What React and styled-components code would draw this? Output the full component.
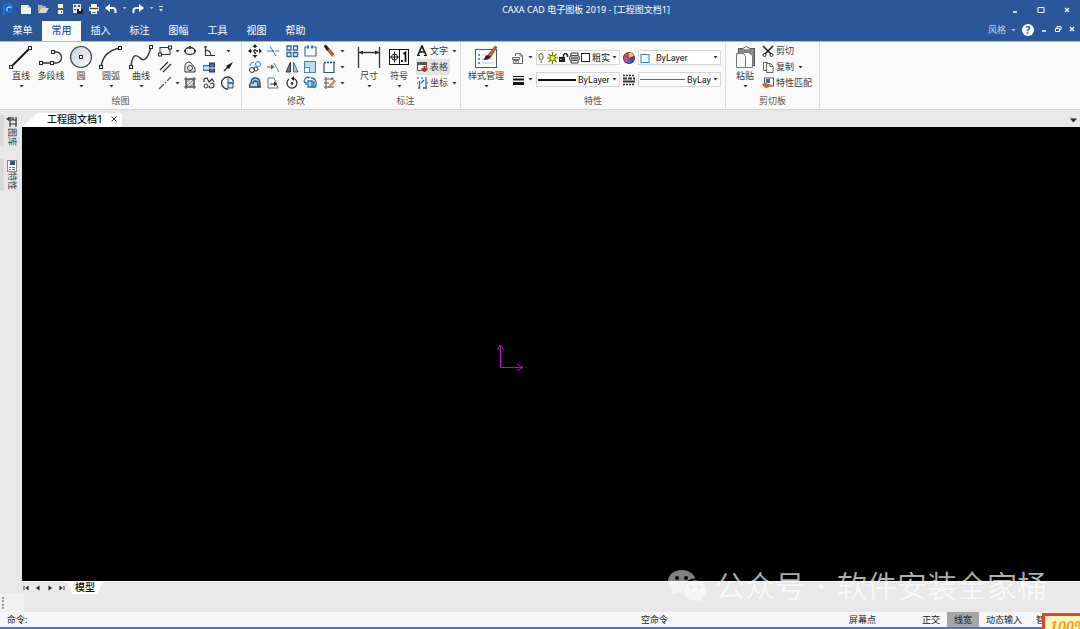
import React from "react";
import styled, { createGlobalStyle, css } from "styled-components";

const theme = {
  blue: "#2b579a",
  ribbon: "#fafafa",
  grey: "#e8e8e8",
  line: "#dcdcdc",
  ink: "#3a3a3a",
  sky: "#3c86c4",
};

const GlobalStyle = createGlobalStyle`
  * { box-sizing: border-box; }
  body {
    margin: 0;
    color: ${theme.ink};
    font-family: "Noto Sans", "Noto Sans CJK SC", sans-serif;
    font-size: 9px;
    line-height: 12px;
    overflow: hidden;
  }
  button, input, select {
    background: transparent;
    border: 0;
    color: inherit;
    font: inherit;
    margin: 0;
    padding: 0;
  }
`;

const Icon = ({ w = 14, h = 14, color = "#333", sw = 1, children, label }) => (
  <svg
    width={w}
    height={h}
    viewBox={`0 0 ${w} ${h}`}
    fill="none"
    stroke={color}
    strokeWidth={sw}
    aria-hidden={!label}
    aria-label={label}
  >
    {children}
  </svg>
);

const Node = ({ x, y }) => (
  <rect x={x - 1.5} y={y - 1.5} width="3" height="3" fill="#fff" stroke="#222" strokeWidth="1" />
);

const DownArrow = ({ color = "#333" }) => (
  <Icon w={5} h={3} color="none">
    <path d="M0.5 0h4L2.5 2.6z" fill={color} />
  </Icon>
);

/* quick access icons */
const quickIcons = [
  ["新建", <Icon key="n" w={12} h={10} color="none"><path d="M1 1h7l3 3v6H1z" fill="#f4f4f4" /><path d="M8 1l3 3H8z" fill="#b9c4d6" /></Icon>],
  ["打开", <Icon key="o" w={12} h={10} color="none"><path d="M1 1h4l1 1h3v2H4L1 8z" fill="#b8b09a" /><path d="M4 4h8L9 9H1z" fill="#d9d5ca" /></Icon>],
  ["保存", <Icon key="s" w={12} h={10} color="none"><path d="M3 0h7v10H3z" fill="#5b5b55" /><path d="M4 0h5v4H4zM4 6h5v4H4z" fill="#f3efe2" /><path d="M7 7h1v2H7z" fill="#555" /></Icon>],
  ["另存为", <Icon key="a" w={12} h={10} color="none"><path d="M2 0h8v9H2z" fill="#e8e8e8" /><path d="M3 1h2v2H3zM7 1h2v2H7zM3 5h2v1H3z" fill="#555" /><path d="M6 5h6v5H6z" fill="#1d1d28" /><path d="M8 5h2v2H8z" fill="#fff" /></Icon>],
  ["打印", <Icon key="p" w={12} h={10} color="none"><path d="M3 0h6v3H3z" fill="#fff" /><path d="M1 3h10v4H1z" fill="#d8d8d0" /><path d="M2 4h8v1H2z" fill="#444" /><path d="M3 6h6v4H3z" fill="#fff" /><path d="M4 8h4v1H4z" fill="#777" /></Icon>],
  ["撤销", <Icon key="u" w={12} h={10} color="#fff" sw={2}><path d="M3 4h5q3 0 2.5 5" /><path d="M5 0v8L0 4z" fill="#fff" stroke="none" /></Icon>],
  ["重做", <Icon key="r" w={12} h={10} color="#fff" sw={2}><path d="M9 4H4Q1 4 1.5 9" /><path d="M7 0v8l5-4z" fill="#fff" stroke="none" /></Icon>],
];

/* large icons */
const LineIcon = () => (
  <Icon w={26} h={26}><path d="M3 23L22 4" stroke="#111" strokeWidth="1.8" /><Node x={3} y={23} /><Node x={22} y={4} /></Icon>
);
const PolylineIcon = () => (
  <Icon w={26} h={26}><path d="M3 19H15M15 19H18a5.5 5.5 0 0 0 0-11H15" strokeWidth="1.4" /><Node x={3} y={19} /><Node x={14} y={19} /><Node x={15} y={8} /></Icon>
);
const CircleIcon = () => (
  <Icon w={26} h={26}>
    <defs><linearGradient id="disc" x1="0" y1="0" x2="1" y2="1"><stop stopColor="#c9d0d6" /><stop offset="1" stopColor="#fbfbfb" /></linearGradient></defs>
    <circle cx="13" cy="13" r="10.5" fill="url(#disc)" stroke="#444" strokeWidth="1.2" /><Node x={13} y={13} />
  </Icon>
);
const ArcIcon = () => (
  <Icon w={26} h={26}><path d="M3 23Q5 7 22 4" strokeWidth="1.4" /><Node x={3} y={23} /><Node x={22} y={4} /></Icon>
);
const CurveIcon = () => (
  <Icon w={26} h={26}><path d="M3 23C4 10 8 10 12 14S20 15 23 3" strokeWidth="1.4" /><Node x={3} y={23} /><Node x={23} y={3} /></Icon>
);
const DimensionIcon = () => (
  <Icon w={26} h={26}><path d="M2.5 3v21M23.5 3v21M3 8.5h20" strokeWidth="1.3" /><path d="M3 8.5l4-2v4zM23 8.5l-4-2v4z" fill="#222" stroke="none" /></Icon>
);
const SymbolIcon = () => (
  <Icon w={26} h={26} color="#111">
    <rect x="3.500" y="5.500" width="19" height="15" fill="#fff" /><path d="M13.500 5.500v15M8.500 7.500v11M4 13h9" /><circle cx="8.500" cy="13" r="3" />
    <path d="M15 16h2v2h-2z" fill="#111" stroke="none" /><path d="M17.500 10l2-1.500V18" strokeWidth="1.800" />
  </Icon>
);
const StyleIcon = () => (
  <Icon w={26} h={26}>
    <rect x="2.500" y="5.500" width="21" height="18" fill="#fff" stroke="#555" />
    <path d="M5 11h2M5 15h2M5 19h2" stroke="#3b6ea5" strokeWidth="1.500" /><path d="M9 11h5M9 15h5M9 19h12M16 15h5" stroke="#bcc8d6" />
    <path d="M15 11l7-9 2 1-6 10z" fill="#c4652f" stroke="#7a3b1c" strokeWidth=".6" /><path d="M11 16q1-5 4-5l3 2q-2 3-7 3z" fill="#222" stroke="none" />
  </Icon>
);
const PasteIcon = () => (
  <Icon w={26} h={26}>
    <rect x="6.500" y="4.500" width="16" height="17" fill="#8d8d8d" stroke="#555" /><path d="M10 6q0-2 2-2 2-3 5 0 2 0 2 2z" fill="#eee" stroke="#666" />
    <path d="M9.500 8.500h7l4 3v12h-11z" fill="#fff" stroke="#777" /><path d="M4.500 9.500h7l2 3v11h-9z" fill="#f5f8fb" stroke="#777" />
  </Icon>
);

/* drawing tools, row by row; null leaves the cell empty */
const arrow = <DownArrow />;
const drawTools = [
  ["矩形", <Icon key="1"><rect x="2" y="3.500" width="10" height="7" /><Node x={2} y={10.5} /><Node x={12} y={3.5} /></Icon>],
  ["矩形选项", arrow],
  ["椭圆", <Icon key="2"><ellipse cx="7" cy="7" rx="5" ry="3.500" strokeWidth="1.300" /><path d="M7 2v3M1 7h2M11 7h2" strokeWidth="1.800" /></Icon>],
  ["坐标轴", <Icon key="3"><path d="M3.500 2v9.500H13M2 3h3M3 6q5 0 6 5" strokeWidth="1.200" /></Icon>],
  ["更多", arrow],
  ["平行线", <Icon key="4"><path d="M2 10L10 2M5 12L13 4" strokeWidth="1.200" /></Icon>],
  null,
  ["孔", <Icon key="5"><path d="M2 12V6q0-4 5-4l5 6v4z" fill="#eee" /><circle cx="7" cy="8" r="2.500" /></Icon>],
  ["轴", <Icon key="6"><rect x="1.500" y="5.500" width="6" height="5" fill="#9fc6e8" stroke="#4d6c8a" /><rect x="7.500" y="3" width="5" height="9" fill="#3572ad" stroke="#333" /><path d="M1 8h12" stroke="#eee" /></Icon>],
  ["箭头", <Icon key="7"><path d="M3 11L8 6" strokeWidth="1.400" /><path d="M12 2L5 6l3 3z" fill="#111" stroke="none" /></Icon>],
  ["中心线", <Icon key="8" color="#44608a"><path d="M1 13L6 8M7 7l1-1M9 5l4-4" strokeWidth="1.300" /></Icon>],
  ["中心线选项", arrow],
  ["剖面线", <Icon key="9" color="#555"><rect x="3" y="3" width="8" height="8" fill="#d4d4d4" /><path d="M3 1v12M11 1v12M1 3h12M1 11h12" /><path d="M3 7l4-4M3 11l8-8M7 11l4-4" strokeWidth=".5" /></Icon>],
  ["云线", <Icon key="10"><path d="M2 6V3l3-1 2 4 3-3 2 3M8 8q4-2 4 1t-3 3-1-2" strokeWidth="1.200" /><circle cx="4" cy="10" r="2" /></Icon>],
  ["圆弧齿形", <Icon key="11"><path d="M12.500 6a6 6 0 1 0-5.500 7" strokeWidth="1.300" /><path d="M7 1v6h6M7 7h5v5H7z" stroke="#25506f" fill="#cfe4f4" /></Icon>],
];

const editTools = [
  ["平移", <Icon key="1" color="#222"><path d="M7 2v10M2 7h10" strokeDasharray="2 1" strokeWidth="1.500" /><path d="M7 0l2.500 3h-5zM7 14l2.500-3h-5zM0 7l3-2.500v5zM14 7l-3-2.500v5z" fill="#222" stroke="none" /></Icon>],
  ["裁剪", <Icon key="2" color={theme.sky}><path d="M1 7h5M9 7h4M4 2l6 10" /><path d="M6 7h2" stroke="#444" /></Icon>],
  ["阵列", <Icon key="3" color="#2c679c" sw={1.3}><path d="M2 2h4v4H2zM8.500 2h4v4h-4zM2 8.500h4v4H2zM8.500 8.500h4v4h-4z" fill="#e4f1fb" /></Icon>],
  ["打断", <Icon key="4" color="#476c8f"><path d="M5 3H2v9h11V3h-3" strokeWidth="1.200" /><path d="M4 3h7" strokeDasharray="2 2" strokeWidth="3" /></Icon>],
  ["删除", <Icon key="5"><path d="M2 2l2-1 8 9-2 2z" fill="#c8692d" stroke="#6b3718" strokeWidth=".7" /><path d="M2 2l2-1 3 4-2 2z" fill="#222" stroke="none" /><path d="M9 12h4" stroke="#cc9a36" /></Icon>],
  ["删除选项", arrow],
  ["复制", <Icon key="6"><circle cx="4" cy="10" r="2.500" /><circle cx="8" cy="9" r="2" /><circle cx="10" cy="4" r="2.500" stroke={theme.sky} /><path d="M2 6q0-4 4-4" stroke={theme.sky} /></Icon>],
  ["延伸", <Icon key="7"><path d="M1 7h6" stroke="#555" /><path d="M8 3l5 9" stroke={theme.sky} /><path d="M5 4.500L8.500 7 5 9.500z" fill="#555" stroke="none" /></Icon>],
  ["镜像", <Icon key="8"><path d="M5.500 2v10H1z" fill="#777" /><path d="M8.500 2v10H13z" fill="#a9cdea" stroke="#3d6f9d" /></Icon>],
  ["缩放", <Icon key="9" color="#4d82af"><rect x="1.500" y="1.500" width="11" height="11" fill="#bcdaf1" /><rect x="1.500" y="7.500" width="5" height="5" fill="#fff" /></Icon>],
  ["拉伸", <Icon key="10" color="#2f5273"><path d="M2 3v9.500h10V3" strokeWidth="1.200" /><path d="M2 2.500h11" strokeDasharray="2 1" strokeWidth="1.500" /></Icon>],
  ["拉伸选项", arrow],
  ["等距线", <Icon key="11" color="#27435f" sw={1.3}><path d="M1 11h12M3 11q-3-2 0-4 0-5 4.500-5T12 8v3M5 8q0-3 2.500-3T10 8v3" fill="#b9d6ec" /></Icon>],
  ["旋转视图", <Icon key="12" color="#56708a"><path d="M2 2h6l4 10H2z" fill="#fff" /><path d="M4 8h6" stroke="#222" /><path d="M8 5.500L11 8l-3 2.500z" fill="#222" stroke="none" /></Icon>],
  ["旋转", <Icon key="13"><path d="M4 3a5 5 0 1 0 5-.5" strokeWidth="1.300" /><path d="M9 0v5L6 2.500z" fill="#222" stroke="none" /><circle cx="7" cy="7.500" r="1" fill="#222" /></Icon>],
  ["分解", <Icon key="14" color="#2a72af" sw={1.3}><path d="M3 7q-3-1-1-4t5-1M8 2q4 0 5 4t-2 6" /><path d="M5 5h4v6H5zM9 6h2v5H9zM3 6v3" fill="#bcdcf3" /></Icon>],
  ["编辑", <Icon key="15"><path d="M2 3h10M2 11h10M4 1v12M10 1v3M2 7h5" stroke="#555" /><path d="M6 11l6-7 1.500 1-6 7z" fill="#d2a460" stroke="#7b5a2c" strokeWidth=".6" /></Icon>],
  ["编辑选项", arrow],
];

const Tools = ({ items, columns }) => (
  <ToolGrid $columns={columns}>
    {items.map((item, i) =>
      item ? (
        <ToolButton key={i} aria-label={item[0]}>{item[1]}</ToolButton>
      ) : (
        <span key={i} />
      )
    )}
  </ToolGrid>
);

const Big = ({ icon, label, width, noArrow }) => (
  <BigButton $width={width}>
    {icon}
    <span>{label}</span>
    <ArrowSlot>{!noArrow && <DownArrow />}</ArrowSlot>
  </BigButton>
);

const Small = ({ icon, label, active, drop }) => (
  <SmallButton $active={active}>
    {icon}
    <span>{label}</span>
    {drop && <DownArrow />}
  </SmallButton>
);

const Group = ({ title, pad, padEnd = "4px", divider = true, children }) => (
  <GroupBox $divider={divider}>
    <GroupBody $pad={pad} $padEnd={padEnd}>{children}</GroupBody>
    <GroupTitle>{title}</GroupTitle>
  </GroupBox>
);

const Header = () => {
  const menus = ["菜单", "常用", "插入", "标注", "图幅", "工具", "视图", "帮助"];
  return (
    <HeaderBar>
      <TitleRow>
        <QuickAccess>
          <Icon w={14} h={14} color="#2f9bf0" sw={2} label="CAXA">
            <path d="M4 13V4q1-3 5-2t3 5-5 3" stroke="#1479dd" /><path d="M7 9V6q3-2 4 0" stroke="#8bd2ff" strokeWidth="1.500" />
          </Icon>
          <QuickList>
            {quickIcons.map(([name, icon], i) => (
              <React.Fragment key={name}>
                <QuickButton aria-label={name}>{icon}</QuickButton>
                {i > 4 && <DownArrow color="#a9bedc" />}
              </React.Fragment>
            ))}
          </QuickList>
          <QuickButton aria-label="自定义">
            <Icon w={6} h={6} color="#dbe5f3"><path d="M1 .5h4" /><path d="M1 3h4L3 5.500z" fill="#dbe5f3" stroke="none" /></Icon>
          </QuickButton>
        </QuickAccess>
        <Title>CAXA CAD 电子图板 2019 - [工程图文档1]</Title>
        <WindowButtons>
          <button aria-label="最小化"><Icon w={8} h={8} color="#fff" sw={1.5}><path d="M2 6h4" /></Icon></button>
          <button aria-label="最大化"><Icon w={8} h={8} color="#fff"><path d="M1 1.500h6v5H1z" /><path d="M1 1.500h6" /></Icon></button>
          <button aria-label="关闭"><Icon w={8} h={8} color="#fff" sw={1.4}><path d="M2 2l4 4M6 2L2 6" /></Icon></button>
        </WindowButtons>
      </TitleRow>
      <MenuRow>
        <nav>
          {menus.map((name) => (
            <MenuTab key={name} $active={name === "常用"}>{name}</MenuTab>
          ))}
        </nav>
        <MenuTools>
          <StyleButton>风格 <DownArrow color="#a9bedc" /></StyleButton>
          <HelpButton aria-label="帮助">?</HelpButton>
          <button aria-label="最小化文档"><Icon w={8} h={8} color="#fff" sw={1.5}><path d="M2 6h4" /></Icon></button>
          <button aria-label="还原文档"><Icon w={8} h={8} color="#fff"><path d="M3 3V1.500h4v3H5.500M1.500 3.500h4v3h-4z" /></Icon></button>
          <button aria-label="关闭文档"><Icon w={8} h={8} color="#fff" sw={1.4}><path d="M2 2l4 4M6 2L2 6" /></Icon></button>
        </MenuTools>
      </MenuRow>
    </HeaderBar>
  );
};

const Combo = ({ label, before, value, gap }) => (
  <ComboBox $gap={gap}>
    {before}
    <select aria-label={label} defaultValue={value}>
      <option>{value}</option>
    </select>
    <DownArrow />
  </ComboBox>
);

const LayerIcons = () => (
  <Icon w={52} h={12}>
    <path d="M2.500 8Q.5 6 1 3.500q2-4 4 0Q5.500 6 4 8zM2.500 10h2" stroke="#555" fill="#fff7c2" />
    <path d="M14.500 0v12M9 6h11M10.500 2l8 8M18.500 2l-8 8" stroke="#6f7d12" strokeWidth="1.200" /><circle cx="14.500" cy="6" r="2.800" fill="#e7ee33" stroke="#6f7d12" />
    <rect x="21" y="5" width="6" height="5" fill="#222" stroke="none" /><path d="M25.500 6V3q2-3 4 0v2" stroke="#222" strokeWidth="1.500" /><path d="M22 7h2v1h-2z" fill="#a8b930" stroke="none" />
    <path d="M33 4V1h7v3M33 8v3h7V8" fill="#fff" /><rect x="31.500" y="3.500" width="10" height="5" rx="2" fill="#bbb" stroke="#444" /><path d="M33 6h7" />
    <rect x="43.500" y="1.500" width="8" height="8" fill="#fff" stroke="#222" />
  </Icon>
);

const Ribbon = () => (
  <RibbonBar>
    <Group title="绘图" pad="6px">
      <Big icon={<LineIcon />} label="直线" width="30px" />
      <Big icon={<PolylineIcon />} label="多段线" width="30px" noArrow />
      <Big icon={<CircleIcon />} label="圆" width="30px" />
      <Big icon={<ArcIcon />} label="圆弧" width="30px" />
      <Big icon={<CurveIcon />} label="曲线" width="30px" />
      <Tools items={drawTools} columns="17px 8px 18px 20px 18px" />
    </Group>
    <Group title="修改" pad="3px" divider={false}>
      <Tools items={editTools} columns="19px 18px 19px 18px 19px 8px" />
    </Group>
    <Group title="标注" pad="3px" padEnd="1px">
      <Big icon={<DimensionIcon />} label="尺寸" width="30px" />
      <Big icon={<SymbolIcon />} label="符号" width="30px" />
      <SmallColumn>
        <Small label="文字" drop icon={<Icon w={12} h={12} color="#111" sw={1.6}><path d="M2 10L6 1l4 9M4 7h4" /><path d="M1 10.500h3M8 10.500h3" strokeWidth="1" /></Icon>} />
        <Small label="表格" active icon={<Icon w={12} h={12} color="#555"><rect x="1.500" y="1.500" width="9" height="8" fill="#fff" /><path d="M2 3h8" strokeWidth="2" /><path d="M8.500 5v6M5.500 8h6" stroke="#d62828" strokeWidth="2" /></Icon>} />
        <Small label="坐标" drop icon={<Icon w={12} h={12} color="#3a5f8b"><path d="M3.500 4v7M2 11h2M10 2v9M7 11h4M5 6l3-3" strokeWidth="1.300" /><path d="M1 1h2M5 1h2M9 1h2M1 6h1M11 6h1" strokeWidth="1.500" stroke="#4c93d0" /></Icon>} />
      </SmallColumn>
    </Group>
    <Group title="特性" pad="3px">
      <Big icon={<StyleIcon />} label="样式管理" width="44px" />
      <PropertyGrid>
        <IconDrop aria-label="图层">
          <Icon w={14} h={14} color="#666"><path d="M4.500 5V2.500h5l2 2v8h-4M9 3v2h2" fill="#fff" /><path d="M1.500 6.500h7v2h-7zM2.500 9.500h5v3h-5zM5 8v4" fill="#eee" /></Icon>
          <DownArrow />
        </IconDrop>
        <Combo label="当前图层" before={<LayerIcons />} value="粗实" gap="2px" />
        <PropertyButton aria-label="颜色">
          <Icon w={12} h={12} color="none">
            <circle cx="6" cy="6" r="6" fill="#333" /><path d="M6 6L1 4a5 5 0 0 1 5-3.200z" fill="#e04836" /><path d="M6 6V.8A5 5 0 0 1 11 4z" fill="#f3cf3d" /><path d="M6 6l5-2a5 5 0 0 1-2 6z" fill="#57439a" /><path d="M6 6l3 4a5 5 0 0 1-5 .8z" fill="#3573c4" /><path d="M6 6L4 10.800A5 5 0 0 1 1 4z" fill="#b9529a" />
          </Icon>
        </PropertyButton>
        <Combo label="颜色值" before={<Icon w={10} h={10} color="#2f80cf"><rect x="1" y="1.500" width="8" height="8" fill="#fff" /></Icon>} value="ByLayer" gap="6px" />
        <IconDrop aria-label="线宽">
          <Icon w={14} h={10} color="#111"><path d="M2 1.500h11" /><path d="M2 4.500h11" strokeWidth="2" /><path d="M2 8.500h11" strokeWidth="3" /></Icon>
          <DownArrow />
        </IconDrop>
        <Combo label="线宽值" before={<Stroke $color="#111" $width="38px" $weight="2px" />} value="ByLayer" gap="2px" />
        <PropertyButton aria-label="线型">
          <Icon w={12} h={12} color="#333"><path d="M0 1.500h12M0 10.500h12" strokeDasharray="2 1" strokeWidth="1.500" /><path d="M0 4.500h12" strokeDasharray="4 1" strokeWidth="2" /><path d="M0 7.500h12" strokeWidth="2" /></Icon>
        </PropertyButton>
        <Combo label="线型值" before={<Stroke $color="#f0331c" $width="45px" $weight="1px" />} value="ByLayer" gap="2px" />
      </PropertyGrid>
    </Group>
    <Group title="剪切板" pad="4px" padEnd="5px">
      <Big icon={<PasteIcon />} label="粘贴" width="30px" />
      <SmallColumn>
        <Small label="剪切" icon={<Icon w={12} h={12} color="#222"><path d="M1 1l8 8M11 1L3 9" strokeWidth="1.600" /><circle cx="2.500" cy="10" r="1.500" /><circle cx="9.500" cy="10" r="1.500" /></Icon>} />
        <Small label="复制" drop icon={<Icon w={12} h={12} color="#666"><path d="M1.500 1.500h4v8h-4z" fill="#fff" /><path d="M4.500 2.500h4l2.500 2.500v6.500H4.500zM8 3v2.500h3" fill="#fff" /></Icon>} />
        <Small label="特性匹配" icon={<Icon w={12} h={12} color="#456"><rect x="2.500" y="1" width="9" height="8" fill="#fff" /><rect x="4" y="2" width="4" height="4" fill="#3c6da8" stroke="none" /><path d="M0 7q4-2 6 0l5 1-4 2q-4 3-7-3z" fill="#c7682c" stroke="none" /></Icon>} />
      </SmallColumn>
    </Group>
  </RibbonBar>
);

const Watermark = () => (
  <WatermarkBox>
    <svg width="40" height="34" viewBox="0 0 40 34" aria-hidden="true">
      <path fill="#fff" fillOpacity=".5" fillRule="evenodd" d="M14.500 1C6.500 1 1 6 1 12.500c0 4 2 7 5 9L5 26l5-2.500q3 1 6 .8C14 16 20 9.500 28 9.500 26.500 4 21 1 14.500 1zM10 7a2 2 0 1 1 0 4 2 2 0 0 1 0-4zm9 0a2 2 0 1 1 0 4 2 2 0 0 1 0-4z" />
      <path fill="#f7f7f7" fillOpacity=".9" fillRule="evenodd" d="M28 11.500c-6.500 0-11.500 4.500-11.500 10S21.500 31.500 28 31.500q2 0 4-.7l4 2.200-1-4c3-2 4.500-4.500 4.500-7.500 0-5.500-5-10-11.500-10zm-4 5a1.600 1.600 0 1 1 0 3.200 1.600 1.600 0 0 1 0-3.200zm8 0a1.600 1.600 0 1 1 0 3.200 1.600 1.600 0 0 1 0-3.200z" />
    </svg>
    <span>公众号</span>
    <Dot>·</Dot>
    <span>软件安装全家桶</span>
  </WatermarkBox>
);

const Workspace = () => (
  <WorkspaceBox>
    <Dock>
      <DockTab>
        <Icon w={12} h={12}><path d="M4 1v10M4 4h7M4 8h7M7 1v3M10 1v10M2 2h4" strokeWidth="1.200" /><path d="M0 3l3-2v4z" fill="#333" stroke="none" /></Icon>
        <span>图库</span>
      </DockTab>
      <DockTab>
        <Icon w={12} h={12} color="#888"><rect x="1.500" y=".5" width="9" height="11" fill="#fff" /><rect x="4" y="1" width="5" height="4" fill="#1e5896" stroke="none" /><path d="M3 7.500h2M6 7.500h3M3 9.500h2M6 9.500h3" stroke="#47729e" /></Icon>
        <span>特性</span>
      </DockTab>
    </Dock>
    <DocumentArea>
      <DocumentTabs>
        <DocumentTab>
          <span>工程图文档1</span>
          <button aria-label="关闭标签"><Icon w={6} h={6} color="#444"><path d="M.5 .5l5 5M5.500 .5l-5 5" /></Icon></button>
        </DocumentTab>
        <TabList aria-label="文档列表"><Icon w={7} h={5} color="none"><path d="M0 .5h7L3.500 4.500z" fill="#222" /></Icon></TabList>
      </DocumentTabs>
      <Canvas>
        <Ucs width="28" height="28" viewBox="0 0 28 28" aria-label="坐标系">
          <path d="M2.500 22.500V1M-1 5l3.500-5L6 5M2.500 22.500H24M19 19l6 3.500-6 3.500" fill="none" stroke="#b010b4" />
        </Ucs>
      </Canvas>
      <ModelRow>
        <ModelNav>
          <button aria-label="第一页"><Icon w={6} h={6}><path d="M1 1v4" /><path d="M5.500 .5v5L2.500 3z" fill="#222" stroke="none" /></Icon></button>
          <button aria-label="上一页"><Icon w={6} h={6} color="none"><path d="M4.500 .5v5L1 3z" fill="#222" /></Icon></button>
          <button aria-label="下一页"><Icon w={6} h={6} color="none"><path d="M1.500 .5v5L5 3z" fill="#222" /></Icon></button>
          <button aria-label="最后一页"><Icon w={6} h={6}><path d="M5 1v4" /><path d="M.5 .5v5L3.500 3z" fill="#222" stroke="none" /></Icon></button>
        </ModelNav>
        <ModelTab>模型</ModelTab>
      </ModelRow>
    </DocumentArea>
  </WorkspaceBox>
);

const App = () => (
  <Page>
    <GlobalStyle />
    <Header />
    <Ribbon />
    <Workspace />
    <ToolStrip><Grip /></ToolStrip>
    <StatusBar>
      <span>命令:</span>
      <span>空命令</span>
      <span>屏幕点</span>
      <Modes>
        <ModeButton>正交</ModeButton>
        <ModeButton $active>线宽</ModeButton>
        <ModeButton>动态输入</ModeButton>
        <ModeButton>智</ModeButton>
      </Modes>
    </StatusBar>
    <Watermark />
    <Badge>100%</Badge>
  </Page>
);
export default App;

const Page = styled.div`
  background: ${theme.grey};
  display: flex;
  flex-direction: column;
  height: 100vh;
  overflow: hidden;
  position: relative;
`;

const center = css`
  align-items: center;
  display: flex;
  justify-content: center;
`;

const HeaderBar = styled.header`
  background: ${theme.blue};
  border-bottom: 1px solid #a9b9dc;
  color: #fff;
  flex-shrink: 0;
`;

const TitleRow = styled.div`
  align-items: center;
  display: flex;
  height: 21px;
  padding-bottom: 4px;
`;

const QuickAccess = styled.div`
  align-items: center;
  display: flex;
  gap: 4px;
`;

const QuickList = styled.div`
  align-items: center;
  display: flex;
  gap: 5px;
  margin-left: 2px;
`;

const QuickButton = styled.button`
  ${center}
`;

const Title = styled.h1`
  flex: 1;
  font-size: 9px;
  font-weight: 400;
  margin: 3px 0 0;
  padding-right: 3px;
  text-align: center;
`;

const WindowButtons = styled.div`
  display: flex;
  gap: 18px;
  margin-top: 4px;
  padding-right: 9px;
`;

const MenuRow = styled.div`
  display: flex;
  justify-content: space-between;
  padding-left: 3px;

  nav {
    display: flex;
  }
`;

const MenuTab = styled.button`
  background: ${({ $active }) => ($active ? theme.ribbon : "transparent")};
  color: ${({ $active }) => ($active ? theme.blue : "#fff")};
  font-size: 10px;
  font-weight: ${({ $active }) => ($active ? 500 : 400)};
  height: 20px;
  line-height: 18px;
  padding-bottom: 2px;
  width: 39px;
`;

const MenuTools = styled.div`
  align-items: center;
  display: flex;
  gap: 6px;
  padding-bottom: 2px;
  padding-right: 4px;
`;

const StyleButton = styled.button`
  ${center}
  color: #c3d1e6;
  gap: 5px;
`;

const HelpButton = styled.button`
  background: #fff;
  border-radius: 50%;
  color: ${theme.blue};
  font-size: 10px;
  font-weight: 700;
  height: 12px;
  line-height: 12px;
  width: 12px;
`;

const RibbonBar = styled.section`
  background: ${theme.ribbon};
  border-bottom: 1px solid #d4d4d4;
  display: flex;
  flex-shrink: 0;
  height: 68px;
`;

const GroupBox = styled.div`
  border-right: 1px solid ${({ $divider }) => ($divider ? theme.line : "transparent")};
  display: flex;
  flex-direction: column;
  padding-top: 1px;
`;

const GroupBody = styled.div`
  display: flex;
  height: 49px;
  padding-left: ${({ $pad }) => $pad};
  padding-right: ${({ $padEnd }) => $padEnd};
`;

const GroupTitle = styled.div`
  color: #555;
  padding-top: 3px;
  text-align: center;
`;

const BigButton = styled.button`
  align-items: center;
  display: flex;
  flex-direction: column;
  padding-top: 1px;
  white-space: nowrap;
  width: ${({ $width }) => $width};

  svg {
    flex-shrink: 0;
  }
`;

const ArrowSlot = styled.span`
  display: flex;
  height: 6px;
  padding-top: 3px;
`;

const ToolGrid = styled.div`
  display: grid;
  grid-auto-rows: 16px;
  grid-template-columns: ${({ $columns }) => $columns};
`;

const ToolButton = styled.button`
  ${center}
`;

const SmallColumn = styled.div`
  align-items: flex-start;
  display: flex;
  flex-direction: column;
  padding-left: 2px;
`;

const SmallButton = styled.button`
  ${center}
  background: ${({ $active }) => ($active ? "#e3e3e3" : "transparent")};
  gap: 2px;
  height: 16px;
  padding-right: 2px;

  span + svg {
    margin-left: 2px;
  }
`;

const PropertyGrid = styled.div`
  align-content: start;
  align-items: center;
  display: grid;
  grid-auto-rows: 15px;
  grid-template-columns: 25px 84px 18px 83px;
  padding-left: 3px;
  padding-top: 7px;
  row-gap: 7px;
`;

const IconDrop = styled.button`
  ${center}
  gap: 3px;
  padding-right: 3px;
`;

const PropertyButton = styled.button`
  ${center}
`;

const ComboBox = styled.label`
  align-items: center;
  background: #fff;
  border: 1px solid #d6d6d6;
  color: #111;
  display: flex;
  gap: ${({ $gap }) => $gap};
  height: 15px;
  padding: 0 2px 0 1px;

  svg {
    flex-shrink: 0;
  }

  select {
    appearance: none;
    flex: 1;
    font-family: Roboto, "Noto Sans CJK SC", sans-serif;
    min-width: 0;
    overflow: hidden;
    text-overflow: clip;
  }
`;

const Stroke = styled.span`
  background: ${({ $color }) => $color};
  flex-shrink: 0;
  height: ${({ $weight }) => $weight};
  width: ${({ $width }) => $width};
`;

const WorkspaceBox = styled.main`
  display: flex;
  flex: 1;
  min-height: 0;
`;

const Dock = styled.aside`
  display: flex;
  flex-direction: column;
  gap: 12px;
  padding-top: 5px;
  width: 22px;
`;

const DockTab = styled.button`
  align-items: center;
  border-left: 4px solid #d9d9d9;
  display: flex;
  flex-direction: column;
  padding: 1px 0;
  width: 20px;

  span {
    line-height: 11px;
    text-orientation: sideways;
    writing-mode: vertical-rl;
  }
`;

const DocumentArea = styled.div`
  display: flex;
  flex: 1;
  flex-direction: column;
`;

const DocumentTabs = styled.div`
  align-items: flex-end;
  display: flex;
  height: 17px;
  justify-content: space-between;
`;

const DocumentTab = styled.div`
  align-items: center;
  background: #fff;
  clip-path: polygon(16px 0, 100% 0, 100% 100%, 0 100%);
  color: #111;
  display: flex;
  font-size: 10px;
  font-weight: 500;
  gap: 8px;
  height: 14px;
  padding: 0 5px 2px 25px;

  button {
    display: flex;
  }
`;

const TabList = styled.button`
  padding: 0 3px 4px;
  display: flex;
`;

const Canvas = styled.div`
  background: #000;
  flex: 1;
  position: relative;
`;

const Ucs = styled.svg`
  left: 45%;
  overflow: visible;
  position: absolute;
  top: 48%;
`;

const ModelRow = styled.div`
  align-items: flex-start;
  border-top: 1px solid #fff;
  display: flex;
  height: 13px;
`;

const ModelNav = styled.div`
  display: flex;
  gap: 6px;
  padding: 3px 2px 0 1px;

  button {
    display: flex;
  }
`;

const ModelTab = styled.button`
  background: #fff;
  clip-path: polygon(0 0, 100% 0, calc(100% - 6px) 100%, 6px 100%);
  color: #111;
  font-size: 10px;
  font-weight: 500;
  height: 12px;
  line-height: 10px;
  padding: 0 8px 2px;
`;

const ToolStrip = styled.div`
  background: linear-gradient(90deg, #f2f2f2 24px, ${theme.grey} 24px);
  flex-shrink: 0;
  height: 18px;
  padding: 3px 2px;
`;

const Grip = styled.div`
  border-left: 2px dotted #999;
  height: 12px;
`;

const StatusBar = styled.footer`
  align-items: center;
  background: #f6f6f6;
  border-bottom: 2px solid #4b7ab8;
  color: #222;
  display: grid;
  flex-shrink: 0;
  grid-template-columns: 634fr 208fr 66px 165px;
  height: 17px;
  padding-left: 7px;
`;

const Modes = styled.div`
  display: flex;
  height: 15px;
  overflow: hidden;
`;

const ModeButton = styled.button`
  background: ${({ $active }) => ($active ? "#a6a6a6" : "transparent")};
  flex-shrink: 0;
  padding: 0 7px;
`;

const WatermarkBox = styled.div`
  align-items: center;
  bottom: 23px;
  color: rgba(255, 255, 255, 0.7);
  display: flex;
  font-size: 30px;
  font-weight: 350;
  line-height: 40px;
  pointer-events: none;
  position: absolute;
  right: 33px;

  svg {
    margin-right: 8px;
  }
`;

const Dot = styled.span`
  font-weight: 700;
  text-align: center;
  width: 32px;
`;

const Badge = styled.div`
  background: #fff6b8;
  border: 3px solid #d9482b;
  border-bottom: 0;
  border-right: 0;
  bottom: 0;
  color: #f09a12;
  font-family: "Liberation Serif", serif;
  font-size: 16px;
  font-style: italic;
  font-weight: 700;
  height: 16px;
  line-height: 22px;
  overflow: hidden;
  padding-left: 5px;
  position: absolute;
  right: 0;
  width: 38px;
`;
